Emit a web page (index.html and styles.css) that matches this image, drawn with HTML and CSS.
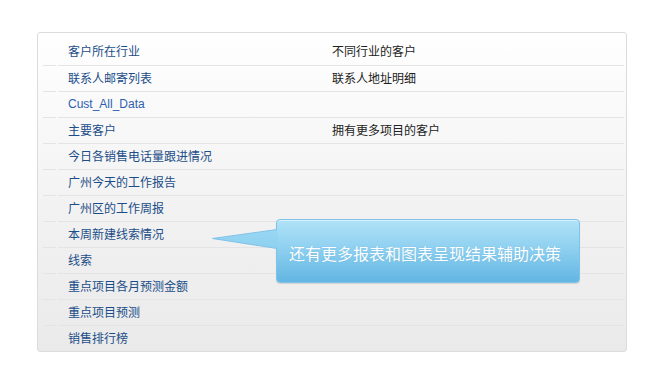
FILE: index.html
```html
<!DOCTYPE html>
<html lang="zh-CN">
<head>
  <title>报表列表</title>
  <meta charset="UTF-8">
  <meta name="viewport" content="width=device-width, initial-scale=1">

  <link rel="stylesheet" href="styles.css">
</head>
<body>

  <div class="report-panel">
    <ul class="report-list">
      <li><span class="mark"></span><a class="name" href="#">客户所在行业</a><span class="desc">不同行业的客户</span></li>
      <li><span class="mark"></span><a class="name" href="#">联系人邮寄列表</a><span class="desc">联系人地址明细</span></li>
      <li><span class="mark"></span><a class="name latin" href="#">Cust_All_Data</a><span class="desc"></span></li>
      <li><span class="mark"></span><a class="name" href="#">主要客户</a><span class="desc">拥有更多项目的客户</span></li>
      <li><span class="mark"></span><a class="name" href="#">今日各销售电话量跟进情况</a><span class="desc"></span></li>
      <li><span class="mark"></span><a class="name" href="#">广州今天的工作报告</a><span class="desc"></span></li>
      <li><span class="mark"></span><a class="name" href="#">广州区的工作周报</a><span class="desc"></span></li>
      <li><span class="mark"></span><a class="name" href="#">本周新建线索情况</a><span class="desc"></span></li>
      <li><span class="mark"></span><a class="name" href="#">线索</a><span class="desc"></span></li>
      <li><span class="mark"></span><a class="name" href="#">重点项目各月预测金额</a><span class="desc"></span></li>
      <li><span class="mark"></span><a class="name" href="#">重点项目预测</a><span class="desc"></span></li>
      <li><span class="mark"></span><a class="name" href="#">销售排行榜</a><span class="desc"></span></li>
    </ul>

    <div class="callout">
      <svg class="callout-tail" width="66" height="20" viewBox="0 0 66 20">
        <defs>
          <linearGradient id="tailFill" x1="0" y1="0" x2="0" y2="1">
            <stop offset="0" stop-color="#9ad7f3"/>
            <stop offset="1" stop-color="#8dd0f0"/>
          </linearGradient>
        </defs>
        <polygon points="66,0.5 0.5,9.5 66,19.5" fill="url(#tailFill)"/>
        <polyline points="65,0.5 0.5,9.5 65,19.5" fill="none" stroke="#7fc2e8" stroke-width="1"/>
      </svg>
      <span class="callout-text">还有更多报表和图表呈现结果辅助决策</span>
    </div>
  </div>

</body>
</html>
```

FILE: styles.css
```css
* {
  box-sizing: border-box;
}

body {
  margin: 0;
  background-color: #fff;
  font-family: "Noto Sans CJK SC", "Liberation Sans", sans-serif;
  font-size: 12px;
}

.report-panel {
  position: relative;
  width: 590px;
  height: 320px;
  margin: 32px 0 0 37px;
  padding: 6px 2px 0 5px;
  border: 1px solid #dcdcdc;
  border-radius: 3px;
  background: linear-gradient(to bottom, #ffffff 0%, #f2f2f2 55%, #eaeaea 100%);
}

.report-list {
  list-style: none;
  margin: 0;
  padding: 0;
}

.report-list li {
  display: flex;
  align-items: stretch;
  height: 26px;
}

.report-list li + li .mark,
.report-list li + li .name,
.report-list li + li .desc {
  border-top: 1px solid #e4e4e4;
}

.mark {
  width: 13px;
  margin-right: 2px;
}

.name {
  width: 274px;
  padding: 3px 0 0 10px;
  color: #1b4d88;
  text-decoration: none;
  line-height: 17px;
}

.name.latin {
  padding-top: 4px;
  font-family: "Liberation Sans", Arial, sans-serif;
  color: #2e5fae;
}

.desc {
  flex: 1;
  padding: 3px 0 0 0;
  color: #222;
  line-height: 17px;
}

.callout {
  position: absolute;
  left: 238px;
  top: 186px;
  width: 304px;
  height: 64px;
  display: flex;
  align-items: center;
  padding: 3px 0 0 12px;
  border: 1px solid #80c3e8;
  border-radius: 4px;
  background: linear-gradient(to bottom, #b0e3f8 0%, #8fd0f0 45%, #62b6e3 100%);
  box-shadow: inset 0 1px 0 rgba(255, 255, 255, 0.5), 0 1px 1px rgba(0, 0, 0, 0.12);
}

.callout-tail {
  position: absolute;
  left: -65px;
  top: 9px;
}

.callout-text {
  color: #fff;
  font-size: 16px;
  text-shadow: 0 0 1px rgba(60, 140, 190, 0.4);
}
```
